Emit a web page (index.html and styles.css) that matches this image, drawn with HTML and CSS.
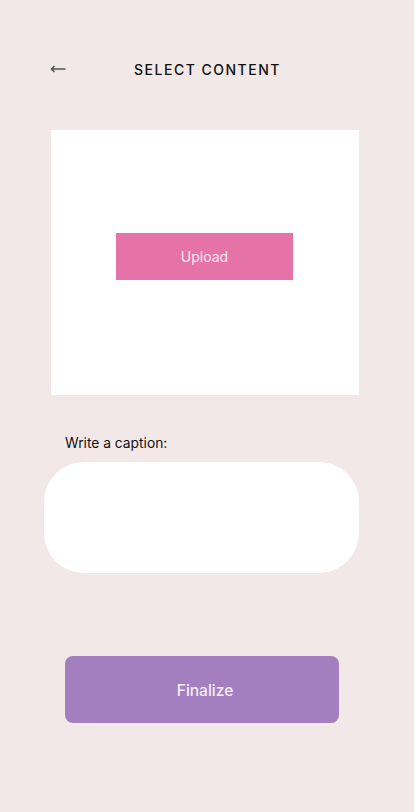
FILE: index.html
```html
<!DOCTYPE html>
<html>
<head>
<meta charset="utf-8">
<link rel="stylesheet" href="styles.css">
</head>
<body>
<div class="screen">
  <header class="topbar">
    <svg class="back" width="16" height="10" viewBox="0 0 16 10"><path d="M15.5 5H1.5M4.5 2L1.5 5L4.5 8" fill="none" stroke="#555" stroke-width="1.6"/></svg>
    <h1 class="title">SELECT CONTENT</h1>
  </header>
  <section class="media">
    <button class="upload">Upload</button>
  </section>
  <label class="caption-label">Write a caption:</label>
  <div class="caption-box"></div>
  <div class="footer">
    <button class="finalize">Finalize</button>
  </div>
</div>
</body>
</html>
```
FILE: styles.css
```css
html, body {
  margin: 0;
  padding: 0;
  background: #f3e8e8;
  font-family: Inter, "Noto Sans", sans-serif;
}
.screen {
  width: 414px;
  height: 812px;
  display: flex;
  flex-direction: column;
}
.topbar {
  position: relative;
  height: 20px;
  margin-top: 59px;
  display: flex;
  align-items: center;
  justify-content: center;
}
.back {
  position: absolute;
  left: 50px;
  top: 5px;
}
.title {
  margin: 0 0 0 1px;
  font-size: 14px;
  font-weight: 500;
  letter-spacing: 1.5px;
  color: #111;
}
.media {
  margin: 51px 0 0 51px;
  width: 308px;
  height: 265px;
  box-sizing: border-box;
  padding: 103px 0 0 65px;
  background: #fff;
  display: flex;
  align-items: flex-start;
}
.upload {
  width: 177px;
  height: 47px;
  border: none;
  background: #e573a7;
  color: #fbe6f1;
  font-family: Inter, sans-serif;
  font-size: 14px;
}
.caption-label {
  margin: 40px 0 0 65px;
  font-size: 13.8px;
  color: #111;
  line-height: 17px;
}
.caption-box {
  margin: 10px 0 0 44px;
  width: 315px;
  height: 111px;
  background: #fff;
  border-radius: 40px;
}
.footer {
  margin: 83px 0 0 65px;
}
.finalize {
  width: 274px;
  height: 67px;
  border: none;
  border-radius: 8px;
  padding: 2px 0 0 6px;
  background: #a47fc0;
  color: #f7eef7;
  font-family: Inter, sans-serif;
  font-size: 15.5px;
  font-weight: 500;
}
```
